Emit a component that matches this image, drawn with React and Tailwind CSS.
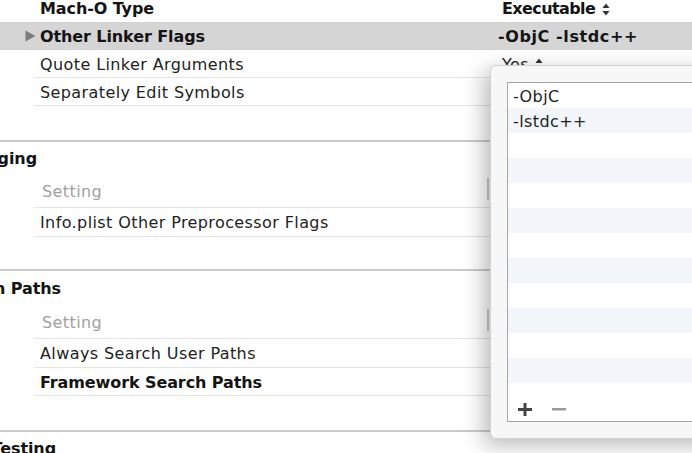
import React from "react";

const Stepper = ({ className = "" }) => (
  <svg width="8" height="13" viewBox="0 0 8 13" className={className}>
    <path d="M4 0.5 L7.5 5 L0.5 5 Z" fill="#333" />
    <path d="M4 12.5 L7.5 8 L0.5 8 Z" fill="#333" />
  </svg>
);

const B = "font-bold text-[#141414] tracking-[-0.1px]";

const Row = ({ label, value, bold = false, border = true, h = "h-[28px]", children }) => (
  <div className={`flex ${h} ml-[34px] ${border ? "border-b border-[#e4e4e4]" : ""}`}>
    <div className={`w-[464px] pl-[6px] pt-[2px] flex items-center whitespace-nowrap ${bold ? B : "text-[#222]"}`}>
      {label}
    </div>
    <div className="flex items-center whitespace-nowrap text-[#222] pt-[2px]">
      {value}
      {children}
    </div>
  </div>
);

const SectionSep = () => <div className="h-[2px] bg-[#cacaca]" />;

const SectionHeader = ({ text, end, h = "h-[32px]" }) => (
  <div className={`${h} flex items-center pt-[2px]`}>
    <div className={`overflow-hidden flex justify-end whitespace-nowrap ${B}`} style={{ width: end }}>
      <span>{text}</span>
    </div>
  </div>
);

const SettingRow = () => (
  <div className="relative flex h-[34px] ml-[34px] border-b border-[#e4e4e4]">
    <div className="pl-[8px] pt-[2px] flex items-center text-[#a0a0a0]">Setting</div>
    <div className="absolute left-[453px] top-[4px] w-[2px] h-[22px] bg-[#c8c8c8]" />
  </div>
);

export default function App() {
  const listRows = ["-ObjC", "-lstdc++", "", "", "", "", "", "", "", "", "", ""];
  return (
    <div className="relative w-[692px] h-[453px] overflow-hidden bg-white font-['DejaVu_Sans',sans-serif] text-[16px] leading-none tracking-[0.4px]">
      <div className="-mt-[6px]">
        {/* Mach-O Type */}
        <div className="flex h-[28px] ml-[34px]">
          <div className={`w-[464px] pl-[6px] pt-[2px] flex items-center ${B}`}>Mach-O Type</div>
          <div className="flex items-center pt-[2px] pl-[4px] font-bold text-[#141414] tracking-[-0.6px]">
            Executable
            <Stepper className="ml-[7px]" />
          </div>
        </div>
        {/* Highlighted */}
        <div className="flex h-[28px] bg-[#d5d5d5]">
          <div className="w-[40px] flex items-center pl-[25px]">
            <svg width="11" height="12" viewBox="0 0 11 12">
              <path d="M0.5 0.5 L10.5 6 L0.5 11.5 Z" fill="#7d7d7d" />
            </svg>
          </div>
          <div className={`w-[458px] flex items-center pt-[2px] ${B}`}>Other Linker Flags</div>
          <div className="flex items-center pt-[2px] font-bold text-[#141414] tracking-[0.6px]">-ObjC -lstdc++</div>
        </div>
        <Row label="Quote Linker Arguments" value={<span className="pl-[4px]">Yes</span>}>
          <Stepper className="ml-[6px]" />
        </Row>
        <Row label="Separately Edit Symbols" />
        <div className="h-[34px]" />
        <SectionSep />
        <SectionHeader text="Packaging" end={37} />
        <SettingRow />
        <Row label="Info.plist Other Preprocessor Flags" h="h-[29px]" />
        <div className="h-[32px]" />
        <SectionSep />
        <SectionHeader text="Search Paths" end={61} h="h-[34px]" />
        <SettingRow />
        <Row label="Always Search User Paths" h="h-[29px]" />
        <Row label="Framework Search Paths" bold h="h-[28px]" />
        <div className="h-[34px]" />
        <SectionSep />
        <SectionHeader text="Testing" end={56} />
      </div>

      {/* Popover */}
      <div className="absolute left-[490px] top-[65px] w-[260px] h-[374px] rounded-tl-[6px] rounded-bl-[6px] bg-[#f7f7f7] border border-[#d2d2d2] shadow-[-6px_6px_22px_rgba(0,0,0,0.28)] pt-[16px] pl-[16px] pb-[16px]">
        <div className="h-full flex flex-col bg-white border border-[#a5a5a5]">
          {listRows.map((t, i) => (
            <div
              key={i}
              className={`h-[25px] shrink-0 flex items-center pl-[5px] pt-[2px] text-[#222] ${i % 2 === 1 ? "bg-[#f2f5f9]" : "bg-white"}`}
            >
              {t}
            </div>
          ))}
          <div className="flex-1 flex items-start pt-[20px] pl-[10px] gap-[20px]">
            <svg width="14" height="13" viewBox="0 0 14 13">
              <rect x="5.5" y="0" width="3" height="13" fill="#444" />
              <rect x="0" y="5" width="14" height="3" fill="#444" />
            </svg>
            <svg width="14" height="13" viewBox="0 0 14 13">
              <rect x="0" y="5" width="14" height="2.5" fill="#9a9a9a" />
            </svg>
          </div>
        </div>
      </div>
    </div>
  );
}
